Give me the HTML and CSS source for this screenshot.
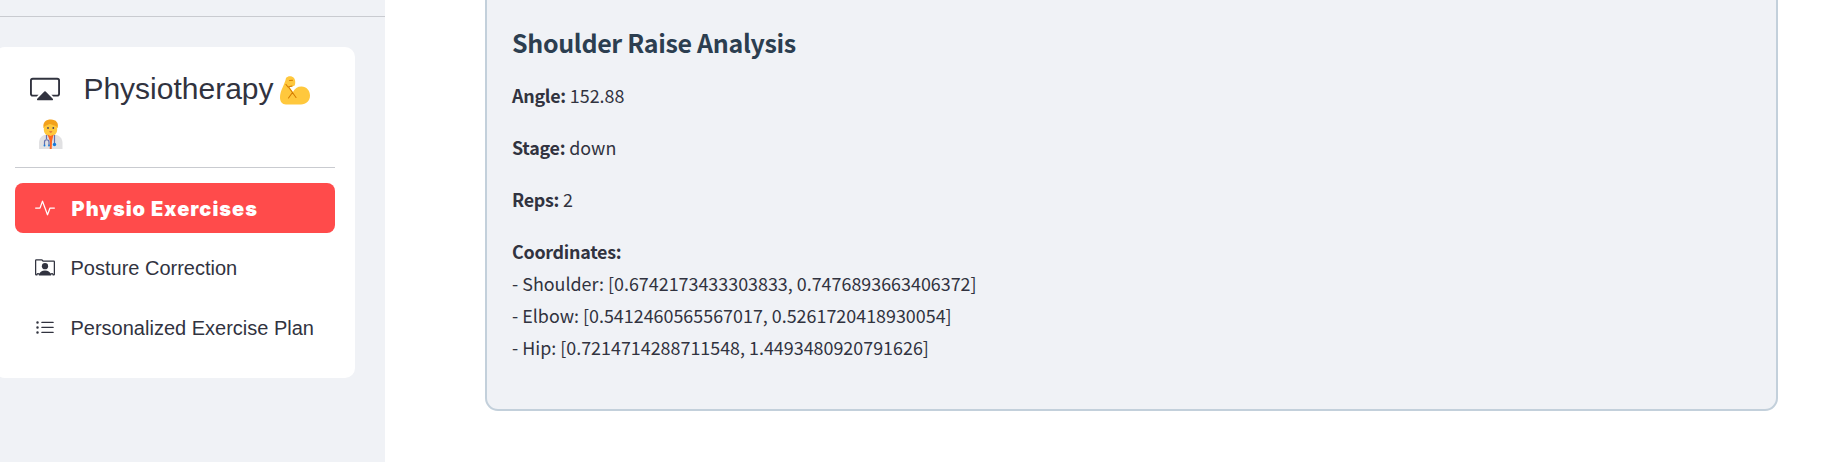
FILE: index.html
```
<!DOCTYPE html>
<html lang="en">
<head>
<meta charset="utf-8">
<title>Physiotherapy</title>
<link rel="stylesheet" href="styles.css">
</head>
<body>
<aside class="sidebar">
  <hr class="divider">
  <nav class="menu">
    <div class="menu-title">
      <div class="title-row">
        <svg class="title-icon" viewBox="0 0 16 16" fill="currentColor"><path d="m7.646 9.354-3.792 3.792a.5.5 0 0 0 .353.854h7.586a.5.5 0 0 0 .354-.854L8.354 9.354a.5.5 0 0 0-.708 0z"/><path d="M11.414 11H14.5a.5.5 0 0 0 .5-.5v-7a.5.5 0 0 0-.5-.5h-13a.5.5 0 0 0-.5.5v7a.5.5 0 0 0 .5.5h3.086l-1 1H1.5A1.5 1.5 0 0 1 0 10.5v-7A1.5 1.5 0 0 1 1.5 2h13A1.5 1.5 0 0 1 16 3.5v7a1.5 1.5 0 0 1-1.5 1.5h-2.086l-1-1z"/></svg>
        <span class="title-text">Physiotherapy</span>
        <svg class="arm" viewBox="0 0 30 29"><path fill="#ffc83d" d="M6 2C8-.3 12-.3 14 2c1.500 2 1.500 5 .7 7.500L11.500 11l-2.500-.5 4 5.500c1.500-3.500 4.500-5.500 8.500-5.500 5 0 8.500 4 8.500 9 0 5.500-4 9-9 9H6c-4 0-6-3-6-7C0 14.500 5 8 6 2Z"/><path fill="none" stroke="#d67d00" stroke-width="1.100" stroke-linecap="round" stroke-linejoin="round" d="M9.500 4.500l3-.3M6 8.500l2 2.500 4-1M8.500 11l7.500 10.500M12.500 16.500L8.500 22"/></svg>
      </div>
      <svg class="doctor" viewBox="0 0 24 31"><path fill="#e1e1e3" d="M0 30v-6c0-5 3-8 8-8.500h7c5 .5 8.500 3.500 8.500 8.500v6Z"/><path fill="#f3a11b" d="M4.500 9C3.500 3 7 .5 12 .5S20 4 18.500 9Z"/><path fill="#ffc83d" d="M5 8c2-2 4-2 6-3 2 1 5 1 7 3 1 6-2 9-6.500 9S4 14 5 8Z"/><path fill="#ff6720" d="M8.500 15.500 11.500 17l3-1.500-1.500 7-.3 7.500h-2L11 22.500Z"/><path fill="none" stroke="#636fae" stroke-width="1.200" d="M7.500 16v4M5.500 26.500V23c0-3 4.500-3 4.500 0v3.500M15.500 16v9"/><circle cx="15.500" cy="25.500" r="1.700" fill="#147bdc"/><circle cx="5.500" cy="26.500" r=".9" fill="#147bdc"/><circle cx="10" cy="26.500" r=".9" fill="#147bdc"/><circle cx="9" cy="9" r=".9" fill="#4b465f"/><circle cx="14.300" cy="9" r=".9" fill="#4b465f"/><path fill="#ca3b3b" d="M10 12.500h3.500q-1.700 2-3.500 0Z"/></svg>
    </div>
    <hr class="divider">
    <ul class="items">
      <li class="item active"><svg viewBox="0 0 16 16" fill="currentColor"><path d="M6 2a.5.5 0 0 1 .47.33L10 12.036l1.530-4.208A.5.5 0 0 1 12 7.500h3.500a.5.5 0 0 1 0 1h-3.150l-1.880 5.170a.5.5 0 0 1-.94 0L6 3.964 4.470 8.171A.5.5 0 0 1 4 8.500H.5a.5.5 0 0 1 0-1h3.150l1.880-5.170A.5.5 0 0 1 6 2"/></svg><span>Physio Exercises</span></li>
      <li class="item"><svg viewBox="0 0 16 16" fill="currentColor"><path d="M8 9.050a2.500 2.500 0 1 0 0-5 2.500 2.500 0 0 0 0 5"/><path d="M1 1a1 1 0 0 0-1 1v11a1 1 0 0 0 1 1h.5a.5.5 0 0 0 .5-.5.5.5 0 0 1 1 0 .5.5 0 0 0 .5.5h9a.5.5 0 0 0 .5-.5.5.5 0 0 1 1 0 .5.5 0 0 0 .5.5h.5a1 1 0 0 0 1-1V3a1 1 0 0 0-1-1H6.707L6 1.293A1 1 0 0 0 5.293 1zm0 1h4.293L6 2.707A1 1 0 0 0 6.707 3H15v10h-.085a1.500 1.500 0 0 0-2.400-.63C11.885 11.223 10.554 10 8 10c-2.555 0-3.886 1.224-4.514 2.370a1.500 1.500 0 0 0-2.400.63H1z"/></svg><span>Posture Correction</span></li>
      <li class="item"><svg viewBox="0 0 16 16" fill="currentColor"><path d="M5 11.500a.5.5 0 0 1 .5-.5h9a.5.5 0 0 1 0 1h-9a.5.5 0 0 1-.5-.5m0-4a.5.5 0 0 1 .5-.5h9a.5.5 0 0 1 0 1h-9a.5.5 0 0 1-.5-.5m0-4a.5.5 0 0 1 .5-.5h9a.5.5 0 0 1 0 1h-9a.5.5 0 0 1-.5-.5m-3 1a1 1 0 1 0 0-2 1 1 0 0 0 0 2m0 4a1 1 0 1 0 0-2 1 1 0 0 0 0 2m0 4a1 1 0 1 0 0-2 1 1 0 0 0 0 2"/></svg><span>Personalized Exercise Plan</span></li>
    </ul>
  </nav>
</aside>
<main class="main">
  <section class="card">
    <h3>Shoulder Raise Analysis</h3>
    <p><strong>Angle:</strong> 152.88</p>
    <p><strong>Stage:</strong> down</p>
    <p><strong>Reps:</strong> 2</p>
    <p><strong>Coordinates:</strong><br>- Shoulder: [0.6742173433303833, 0.7476893663406372]<br>- Elbow: [0.5412460565567017, 0.5261720418930054]<br>- Hip: [0.7214714288711548, 1.4493480920791626]</p>
  </section>
</main>
</body>
</html>
```

FILE: styles.css
```
* { box-sizing: border-box; }
body {
  margin: 0;
  height: 462px;
  display: flex;
  overflow: hidden;
  background: #fff;
  color: #31333f;
}
.sidebar {
  width: 385px;
  padding-top: 16px;
  background: #f0f2f6;
  font-family: "Liberation Sans", Arial, sans-serif;
}
.divider {
  height: 1px;
  margin: 0;
  border: 0;
  background: #c9cbd0;
}
.menu {
  width: 360px;
  height: 331px;
  margin: 30px 0 0 -5px;
  padding: 20px;
  border-radius: 10px;
  background: #fff;
}
.menu-title {
  height: 100px;
  padding-left: 15px;
}
.title-row {
  display: flex;
  height: 45px;
}
.title-icon {
  width: 30px;
  height: 30px;
  margin-top: 7px;
}
.title-text {
  margin-left: 23.4px;
  font-size: 30px;
  line-height: 44px;
}
.arm {
  width: 30px;
  height: 29px;
  margin: 9px 0 0 6px;
}
.doctor {
  display: block;
  width: 24px;
  height: 31px;
  margin: 7px 0 0 9px;
}
.items {
  margin: 15px 0 0;
  padding: 0;
  list-style: none;
  display: grid;
  gap: 10px;
}
.item {
  display: flex;
  align-items: center;
  height: 50px;
  padding: 0 20px;
  border-radius: 8px;
  font-size: 20px;
  white-space: nowrap;
}
.item svg {
  width: 20px;
  height: 20px;
  margin-right: 15.5px;
}
.active {
  background: #ff4b4b;
  color: #fff;
  font-family: Inter, "Liberation Sans", sans-serif;
  font-weight: 900;
  letter-spacing: 1px;
}
.active span { padding: 2px 0 0 1px; }
.main {
  flex: 1;
  padding: 0 64px 0 100px;
}
.card {
  height: 423px;
  margin-top: -12px;
  padding: 35px 25px;
  border: 2px solid #c3d0db;
  border-radius: 13px;
  background: #f0f2f6;
  font-family: "Noto Sans CJK SC", "Noto Sans", sans-serif;
  font-size: 17.9px;
  line-height: 32px;
}
.card h3 {
  margin: 0 0 20px;
  color: #2c3e50;
  font-size: 25px;
  line-height: 34px;
  font-weight: 700;
  letter-spacing: -0.33px;
}
.card p { margin: 0 0 20px; }
.card strong {
  font-weight: 700;
  letter-spacing: -0.28px;
}
```
